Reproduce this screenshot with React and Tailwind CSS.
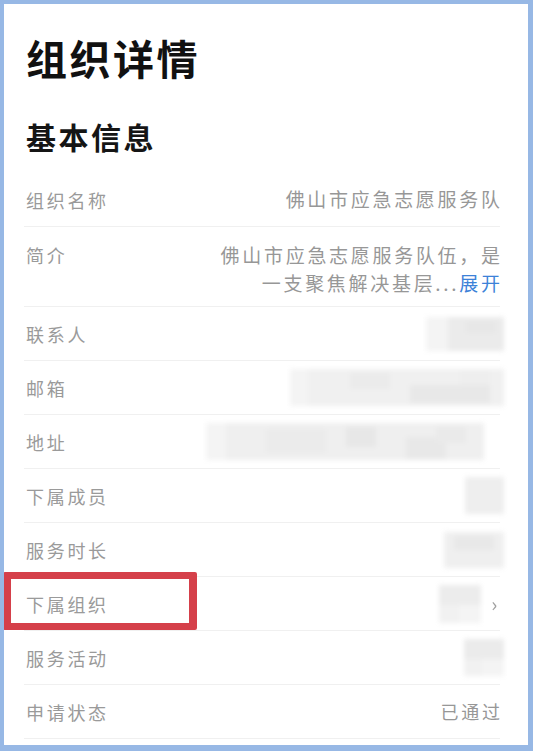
import React from "react";

const font = { fontFamily: '"Noto Sans CJK SC", "Noto Sans", sans-serif' };

function Blur({ w, h, parts = [] }) {
  return (
    <div className="relative blur-[2.5px]" style={{ width: w, height: h }}>
      <div className="absolute inset-0 bg-[#f4f4f4]" />
      {parts.map((p, i) => (
        <div
          key={i}
          className="absolute"
          style={{ left: p[0], top: p[1], width: p[2], height: p[3], background: p[4] }}
        />
      ))}
    </div>
  );
}

function Row({ label, children }) {
  return (
    <div className="pl-[20px] pr-[28px]">
      <div className="flex items-center justify-between h-[54px] border-b border-[#f0f0f0] pl-[2px]">
        <span className="text-[18px] tracking-[2.7px] text-[#9a9a9a] leading-[28px] whitespace-nowrap">{label}</span>
        <div className="flex items-center text-[19px] tracking-[2.7px] text-[#979797]">{children}</div>
      </div>
    </div>
  );
}

export default function App() {
  return (
    <div
      style={font}
      className="relative w-[533px] h-[751px] bg-white border-l-[4px] border-t-[4px] border-r-[5px] border-b-[6px] border-[#97b8e5] overflow-hidden"
    >
      <div className="pl-[22px] pt-[25px] text-[41px] leading-[56px] font-bold tracking-[2.5px] text-[#111]">
        组织详情
      </div>
      <div className="pl-[22px] mt-[31px] text-[30px] leading-[40px] font-bold tracking-[2.5px] text-[#151515]">
        基本信息
      </div>
      <div className="mt-[17px]">
        <Row label="组织名称">
          <span className="-mr-[2.7px]">佛山市应急志愿服务队</span>
        </Row>
        <div className="pl-[20px] pr-[28px]">
          <div className="flex justify-between h-[80px] pt-[14px] border-b border-[#f0f0f0] pl-[2px]">
            <span className="text-[18px] tracking-[2.7px] text-[#9a9a9a] leading-[28px]">简介</span>
            <div className="text-right text-[19px] leading-[28px] tracking-[2.7px] text-[#979797] -mr-[2.7px]">
              <div>佛山市应急志愿服务队伍，是</div>
              <div>
                一支聚焦解决基层...<span className="text-[#3d82d8]">展开</span>
              </div>
            </div>
          </div>
        </div>
        <Row label="联系人">
          <div className="mr-[-4px]">
            <Blur w={78} h={34} parts={[[22, 0, 56, 34, "#ebebeb"], [40, 4, 30, 12, "#e7e7e7"]]} />
          </div>
        </Row>
        <Row label="邮箱">
          <div className="mr-[-4px]">
            <Blur
              w={214}
              h={37}
              parts={[
                [18, 0, 196, 37, "#f0f0f0"],
                [60, 4, 40, 16, "#ebebeb"],
                [120, 16, 80, 18, "#e8e8e8"],
                [170, 2, 30, 14, "#eeeeee"],
              ]}
            />
          </div>
        </Row>
        <Row label="地址">
          <div className="mr-[16px]">
            <Blur
              w={278}
              h={37}
              parts={[
                [20, 0, 258, 37, "#efefef"],
                [60, 6, 60, 24, "#ebebeb"],
                [140, 4, 30, 20, "#e7e7e7"],
                [200, 14, 40, 22, "#e8e8e8"],
                [230, 4, 30, 16, "#eaeaea"],
              ]}
            />
          </div>
        </Row>
        <Row label="下属成员">
          <div className="mr-[-4px]">
            <Blur w={39} h={37} parts={[[0, 0, 39, 37, "#eeeeee"]]} />
          </div>
        </Row>
        <Row label="服务时长">
          <div className="mr-[-4px]">
            <Blur w={60} h={36} parts={[[0, 0, 60, 36, "#efefef"], [10, 4, 40, 14, "#e8e8e8"]]} />
          </div>
        </Row>
        <Row label="下属组织">
          <div className="flex items-center">
            <Blur w={42} h={38} parts={[[0, 0, 42, 20, "#ececec"], [0, 20, 20, 18, "#f1f1f1"]]} />
            <span className="ml-[10px] text-[20px] text-[#a0a0a0] leading-none blur-[0.4px]">›</span>
          </div>
        </Row>
        <Row label="服务活动">
          <div className="mr-[-4px]">
            <Blur w={40} h={37} parts={[[0, 0, 40, 20, "#ebebeb"], [0, 20, 18, 17, "#f1f1f1"]]} />
          </div>
        </Row>
        <Row label="申请状态">
          <span className="-mr-[2.7px] text-[18px]">已通过</span>
        </Row>
      </div>
      <div className="absolute left-[-1px] top-[568px] w-[194px] h-[58px] border-x-[8px] border-y-[7px] border-[#d5404a] rounded-[2px]" />
    </div>
  );
}
